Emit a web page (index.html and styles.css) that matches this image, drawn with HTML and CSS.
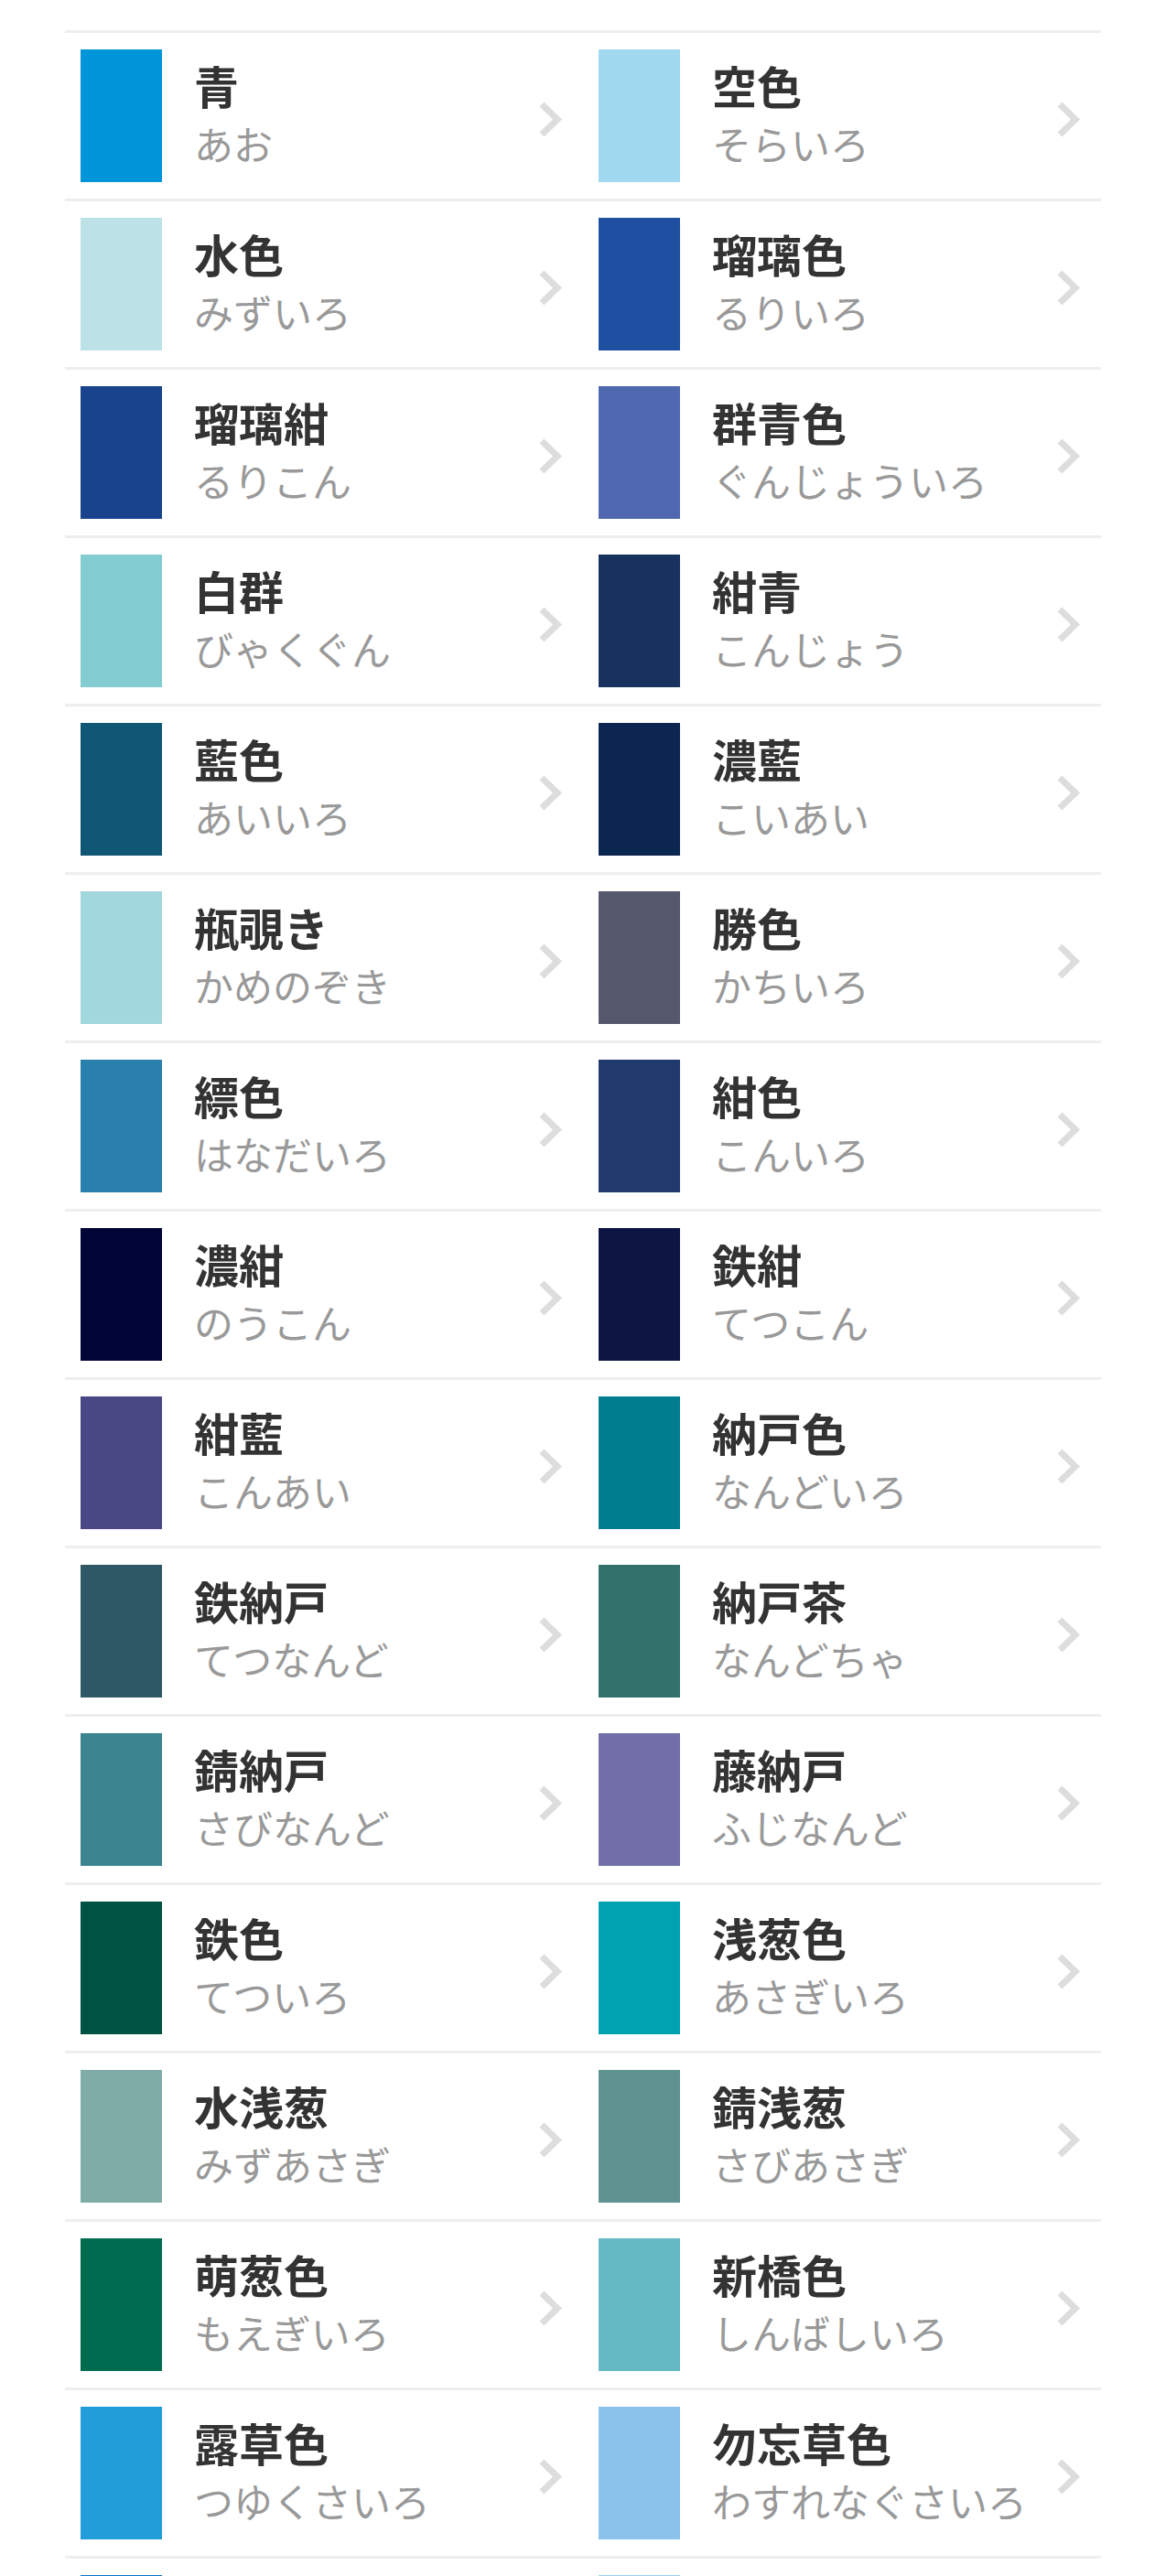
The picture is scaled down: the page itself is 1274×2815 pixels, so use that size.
FILE: index.html
```html
<!DOCTYPE html>
<html lang="ja">
<head>
<meta charset="utf-8">
<title>青系の色</title>
<link rel="stylesheet" href="styles.css">
</head>
<body>
<ul class="color-list">
  <li class="color-item"><span class="swatch" style="background:#0095d9"></span><div class="text"><div class="name">青</div><div class="reading">あお</div></div><svg class="chev" viewBox="0 0 26 39" width="26" height="39"><polyline points="3,3 20,19.5 3,36"/></svg></li>
  <li class="color-item"><span class="swatch" style="background:#a0d8ef"></span><div class="text"><div class="name">空色</div><div class="reading">そらいろ</div></div><svg class="chev" viewBox="0 0 26 39" width="26" height="39"><polyline points="3,3 20,19.5 3,36"/></svg></li>
  <li class="color-item"><span class="swatch" style="background:#bce2e8"></span><div class="text"><div class="name">水色</div><div class="reading">みずいろ</div></div><svg class="chev" viewBox="0 0 26 39" width="26" height="39"><polyline points="3,3 20,19.5 3,36"/></svg></li>
  <li class="color-item"><span class="swatch" style="background:#1e4fa0"></span><div class="text"><div class="name">瑠璃色</div><div class="reading">るりいろ</div></div><svg class="chev" viewBox="0 0 26 39" width="26" height="39"><polyline points="3,3 20,19.5 3,36"/></svg></li>
  <li class="color-item"><span class="swatch" style="background:#19438c"></span><div class="text"><div class="name">瑠璃紺</div><div class="reading">るりこん</div></div><svg class="chev" viewBox="0 0 26 39" width="26" height="39"><polyline points="3,3 20,19.5 3,36"/></svg></li>
  <li class="color-item"><span class="swatch" style="background:#4f68b0"></span><div class="text"><div class="name">群青色</div><div class="reading">ぐんじょういろ</div></div><svg class="chev" viewBox="0 0 26 39" width="26" height="39"><polyline points="3,3 20,19.5 3,36"/></svg></li>
  <li class="color-item"><span class="swatch" style="background:#83ccd2"></span><div class="text"><div class="name">白群</div><div class="reading">びゃくぐん</div></div><svg class="chev" viewBox="0 0 26 39" width="26" height="39"><polyline points="3,3 20,19.5 3,36"/></svg></li>
  <li class="color-item"><span class="swatch" style="background:#17325e"></span><div class="text"><div class="name">紺青</div><div class="reading">こんじょう</div></div><svg class="chev" viewBox="0 0 26 39" width="26" height="39"><polyline points="3,3 20,19.5 3,36"/></svg></li>
  <li class="color-item"><span class="swatch" style="background:#105675"></span><div class="text"><div class="name">藍色</div><div class="reading">あいいろ</div></div><svg class="chev" viewBox="0 0 26 39" width="26" height="39"><polyline points="3,3 20,19.5 3,36"/></svg></li>
  <li class="color-item"><span class="swatch" style="background:#0b2650"></span><div class="text"><div class="name">濃藍</div><div class="reading">こいあい</div></div><svg class="chev" viewBox="0 0 26 39" width="26" height="39"><polyline points="3,3 20,19.5 3,36"/></svg></li>
  <li class="color-item"><span class="swatch" style="background:#a2d7dd"></span><div class="text"><div class="name">瓶覗き</div><div class="reading">かめのぞき</div></div><svg class="chev" viewBox="0 0 26 39" width="26" height="39"><polyline points="3,3 20,19.5 3,36"/></svg></li>
  <li class="color-item"><span class="swatch" style="background:#55576b"></span><div class="text"><div class="name">勝色</div><div class="reading">かちいろ</div></div><svg class="chev" viewBox="0 0 26 39" width="26" height="39"><polyline points="3,3 20,19.5 3,36"/></svg></li>
  <li class="color-item"><span class="swatch" style="background:#2a80ad"></span><div class="text"><div class="name">縹色</div><div class="reading">はなだいろ</div></div><svg class="chev" viewBox="0 0 26 39" width="26" height="39"><polyline points="3,3 20,19.5 3,36"/></svg></li>
  <li class="color-item"><span class="swatch" style="background:#213a6e"></span><div class="text"><div class="name">紺色</div><div class="reading">こんいろ</div></div><svg class="chev" viewBox="0 0 26 39" width="26" height="39"><polyline points="3,3 20,19.5 3,36"/></svg></li>
  <li class="color-item"><span class="swatch" style="background:#000536"></span><div class="text"><div class="name">濃紺</div><div class="reading">のうこん</div></div><svg class="chev" viewBox="0 0 26 39" width="26" height="39"><polyline points="3,3 20,19.5 3,36"/></svg></li>
  <li class="color-item"><span class="swatch" style="background:#0d1642"></span><div class="text"><div class="name">鉄紺</div><div class="reading">てつこん</div></div><svg class="chev" viewBox="0 0 26 39" width="26" height="39"><polyline points="3,3 20,19.5 3,36"/></svg></li>
  <li class="color-item"><span class="swatch" style="background:#4a4785"></span><div class="text"><div class="name">紺藍</div><div class="reading">こんあい</div></div><svg class="chev" viewBox="0 0 26 39" width="26" height="39"><polyline points="3,3 20,19.5 3,36"/></svg></li>
  <li class="color-item"><span class="swatch" style="background:#007d8e"></span><div class="text"><div class="name">納戸色</div><div class="reading">なんどいろ</div></div><svg class="chev" viewBox="0 0 26 39" width="26" height="39"><polyline points="3,3 20,19.5 3,36"/></svg></li>
  <li class="color-item"><span class="swatch" style="background:#2e5865"></span><div class="text"><div class="name">鉄納戸</div><div class="reading">てつなんど</div></div><svg class="chev" viewBox="0 0 26 39" width="26" height="39"><polyline points="3,3 20,19.5 3,36"/></svg></li>
  <li class="color-item"><span class="swatch" style="background:#32716c"></span><div class="text"><div class="name">納戸茶</div><div class="reading">なんどちゃ</div></div><svg class="chev" viewBox="0 0 26 39" width="26" height="39"><polyline points="3,3 20,19.5 3,36"/></svg></li>
  <li class="color-item"><span class="swatch" style="background:#3b8490"></span><div class="text"><div class="name">錆納戸</div><div class="reading">さびなんど</div></div><svg class="chev" viewBox="0 0 26 39" width="26" height="39"><polyline points="3,3 20,19.5 3,36"/></svg></li>
  <li class="color-item"><span class="swatch" style="background:#716ea8"></span><div class="text"><div class="name">藤納戸</div><div class="reading">ふじなんど</div></div><svg class="chev" viewBox="0 0 26 39" width="26" height="39"><polyline points="3,3 20,19.5 3,36"/></svg></li>
  <li class="color-item"><span class="swatch" style="background:#005242"></span><div class="text"><div class="name">鉄色</div><div class="reading">てついろ</div></div><svg class="chev" viewBox="0 0 26 39" width="26" height="39"><polyline points="3,3 20,19.5 3,36"/></svg></li>
  <li class="color-item"><span class="swatch" style="background:#00a2b0"></span><div class="text"><div class="name">浅葱色</div><div class="reading">あさぎいろ</div></div><svg class="chev" viewBox="0 0 26 39" width="26" height="39"><polyline points="3,3 20,19.5 3,36"/></svg></li>
  <li class="color-item"><span class="swatch" style="background:#80aca8"></span><div class="text"><div class="name">水浅葱</div><div class="reading">みずあさぎ</div></div><svg class="chev" viewBox="0 0 26 39" width="26" height="39"><polyline points="3,3 20,19.5 3,36"/></svg></li>
  <li class="color-item"><span class="swatch" style="background:#5e938f"></span><div class="text"><div class="name">錆浅葱</div><div class="reading">さびあさぎ</div></div><svg class="chev" viewBox="0 0 26 39" width="26" height="39"><polyline points="3,3 20,19.5 3,36"/></svg></li>
  <li class="color-item"><span class="swatch" style="background:#006c4f"></span><div class="text"><div class="name">萌葱色</div><div class="reading">もえぎいろ</div></div><svg class="chev" viewBox="0 0 26 39" width="26" height="39"><polyline points="3,3 20,19.5 3,36"/></svg></li>
  <li class="color-item"><span class="swatch" style="background:#63b9c4"></span><div class="text"><div class="name">新橋色</div><div class="reading">しんばしいろ</div></div><svg class="chev" viewBox="0 0 26 39" width="26" height="39"><polyline points="3,3 20,19.5 3,36"/></svg></li>
  <li class="color-item"><span class="swatch" style="background:#229dd9"></span><div class="text"><div class="name">露草色</div><div class="reading">つゆくさいろ</div></div><svg class="chev" viewBox="0 0 26 39" width="26" height="39"><polyline points="3,3 20,19.5 3,36"/></svg></li>
  <li class="color-item"><span class="swatch" style="background:#8ac2eb"></span><div class="text"><div class="name">勿忘草色</div><div class="reading">わすれなぐさいろ</div></div><svg class="chev" viewBox="0 0 26 39" width="26" height="39"><polyline points="3,3 20,19.5 3,36"/></svg></li>
  <li class="color-item"><span class="swatch" style="background:#0a73c4"></span><div class="text"><div class="name">青藍</div><div class="reading">せいらん</div></div><svg class="chev" viewBox="0 0 26 39" width="26" height="39"><polyline points="3,3 20,19.5 3,36"/></svg></li>
  <li class="color-item"><span class="swatch" style="background:#95d2ee"></span><div class="text"><div class="name">天色</div><div class="reading">あまいろ</div></div><svg class="chev" viewBox="0 0 26 39" width="26" height="39"><polyline points="3,3 20,19.5 3,36"/></svg></li>
</ul>
</body>
</html>
```
FILE: styles.css
```css
html, body {
  margin: 0;
  padding: 0;
  background: #ffffff;
}

body {
  font-family: "Noto Sans CJK JP", "Noto Sans", sans-serif;
}

.color-list {
  list-style: none;
  margin: 33px 71px 0;
  padding: 0;
  display: grid;
  grid-template-columns: 1fr 1fr;
}

.color-item {
  display: flex;
  align-items: center;
  border-top: 3px solid #eeeeee;
  padding: 18px 22px 18px 17px;
  height: 145px;
}

.swatch {
  flex: none;
  width: 89px;
  height: 145px;
}

.text {
  margin-left: 35px;
  flex: 1;
  min-width: 0;
}

.name {
  font-size: 49px;
  font-weight: 700;
  line-height: 58px;
  color: #333333;
}

.reading {
  font-size: 43px;
  font-weight: 400;
  line-height: 68px;
  color: #999999;
}

.chev {
  flex: none;
  margin-top: 7px;
  fill: none;
  stroke: #dddddd;
  stroke-width: 7;
  stroke-linecap: butt;
  stroke-linejoin: miter;
}
```
